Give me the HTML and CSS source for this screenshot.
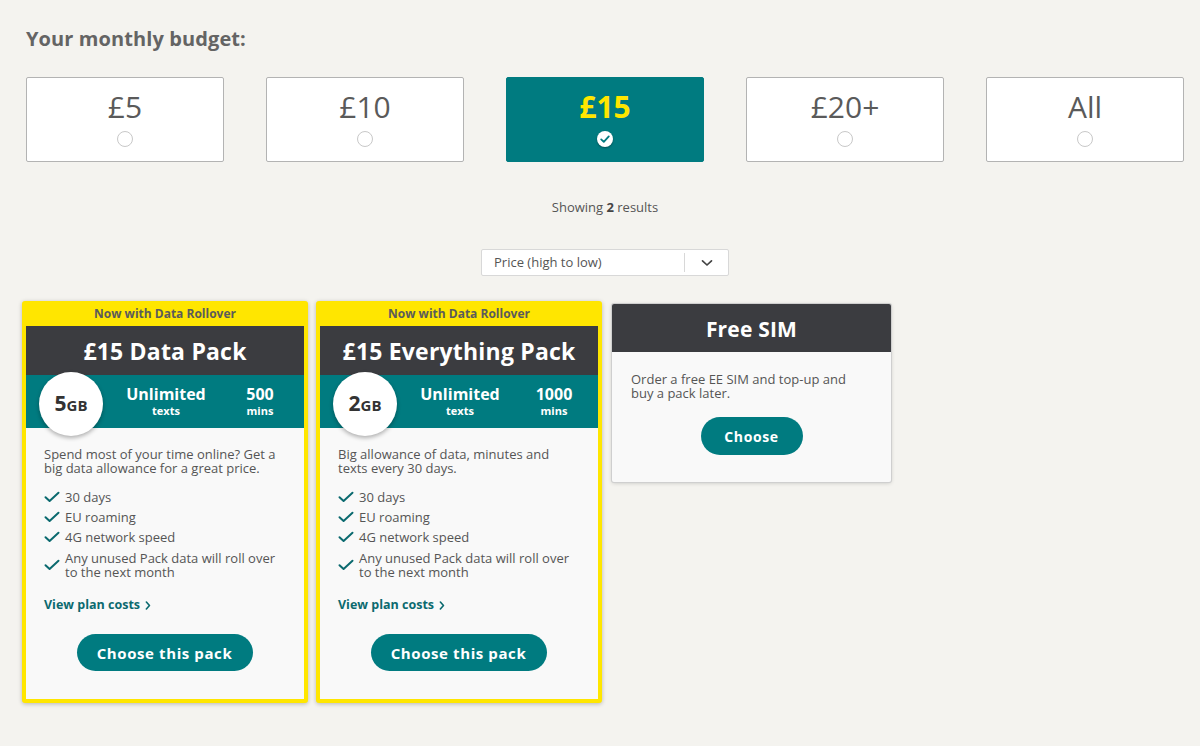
FILE: index.html
```html
<!DOCTYPE html>
<html lang="en">
<head>
<meta charset="utf-8">
<title>Your monthly budget</title>
<link rel="stylesheet" href="styles.css">
</head>
<body>
<main class="page">
  <h2 class="budget-title">Your monthly budget:</h2>
  <div class="budget-options">
    <div class="budget-option"><span class="amount">£5</span><span class="radio"></span></div>
    <div class="budget-option"><span class="amount">£10</span><span class="radio"></span></div>
    <div class="budget-option selected"><span class="amount">£15</span><span class="radio checked"><svg viewBox="0 0 16 16" width="16" height="16"><path d="M4.2 8.4 L6.8 10.9 L11.8 5.4" fill="none" stroke="#007b80" stroke-width="1.8" stroke-linecap="round" stroke-linejoin="round"/></svg></span></div>
    <div class="budget-option"><span class="amount">£20+</span><span class="radio"></span></div>
    <div class="budget-option"><span class="amount">All</span><span class="radio"></span></div>
  </div>

  <p class="results">Showing <b>2</b> results</p>

  <div class="sort-wrap">
    <div class="sort">
      <span class="sort-label">Price (high to low)</span>
      <span class="sort-arrow"><svg viewBox="0 0 12 8" width="12" height="8"><path d="M1.5 1.8 L6 6 L10.5 1.8" fill="none" stroke="#444" stroke-width="1.7" stroke-linecap="round" stroke-linejoin="round"/></svg></span>
    </div>
  </div>

  <div class="cards">
    <div class="card featured">
      <div class="banner">Now with Data Rollover</div>
      <div class="card-inner">
        <div class="card-head">£15 Data Pack</div>
        <div class="allowance">
          <div class="data-circle"><span class="num">5</span><span class="unit">GB</span></div>
          <div class="stat"><span class="big">Unlimited</span><span class="small">texts</span></div>
          <div class="stat"><span class="big">500</span><span class="small">mins</span></div>
        </div>
        <div class="card-body">
          <p class="desc">Spend most of your time online? Get a big data allowance for a great price.</p>
          <ul class="features">
            <li><svg class="tick" viewBox="0 0 16 12" width="16" height="12"><path d="M1.5 6.2 L5.6 10 L14.5 1.8" fill="none" stroke="#0b6a6f" stroke-width="2" stroke-linecap="round" stroke-linejoin="round"/></svg><span>30 days</span></li>
            <li><svg class="tick" viewBox="0 0 16 12" width="16" height="12"><path d="M1.5 6.2 L5.6 10 L14.5 1.8" fill="none" stroke="#0b6a6f" stroke-width="2" stroke-linecap="round" stroke-linejoin="round"/></svg><span>EU roaming</span></li>
            <li><svg class="tick" viewBox="0 0 16 12" width="16" height="12"><path d="M1.5 6.2 L5.6 10 L14.5 1.8" fill="none" stroke="#0b6a6f" stroke-width="2" stroke-linecap="round" stroke-linejoin="round"/></svg><span>4G network speed</span></li>
            <li><svg class="tick" viewBox="0 0 16 12" width="16" height="12"><path d="M1.5 6.2 L5.6 10 L14.5 1.8" fill="none" stroke="#0b6a6f" stroke-width="2" stroke-linecap="round" stroke-linejoin="round"/></svg><span>Any unused Pack data will roll over to the next month</span></li>
          </ul>
          <a class="costs" href="#">View plan costs <svg viewBox="0 0 6 10" width="6" height="9"><path d="M1.2 1.2 L4.6 5 L1.2 8.8" fill="none" stroke="#0b6a6f" stroke-width="1.8" stroke-linecap="round" stroke-linejoin="round"/></svg></a>
          <div class="btn-row"><button class="btn wide">Choose this pack</button></div>
        </div>
      </div>
    </div>

    <div class="card featured">
      <div class="banner">Now with Data Rollover</div>
      <div class="card-inner">
        <div class="card-head">£15 Everything Pack</div>
        <div class="allowance">
          <div class="data-circle"><span class="num">2</span><span class="unit">GB</span></div>
          <div class="stat"><span class="big">Unlimited</span><span class="small">texts</span></div>
          <div class="stat"><span class="big">1000</span><span class="small">mins</span></div>
        </div>
        <div class="card-body">
          <p class="desc">Big allowance of data, minutes and texts every 30 days.</p>
          <ul class="features">
            <li><svg class="tick" viewBox="0 0 16 12" width="16" height="12"><path d="M1.5 6.2 L5.6 10 L14.5 1.8" fill="none" stroke="#0b6a6f" stroke-width="2" stroke-linecap="round" stroke-linejoin="round"/></svg><span>30 days</span></li>
            <li><svg class="tick" viewBox="0 0 16 12" width="16" height="12"><path d="M1.5 6.2 L5.6 10 L14.5 1.8" fill="none" stroke="#0b6a6f" stroke-width="2" stroke-linecap="round" stroke-linejoin="round"/></svg><span>EU roaming</span></li>
            <li><svg class="tick" viewBox="0 0 16 12" width="16" height="12"><path d="M1.5 6.2 L5.6 10 L14.5 1.8" fill="none" stroke="#0b6a6f" stroke-width="2" stroke-linecap="round" stroke-linejoin="round"/></svg><span>4G network speed</span></li>
            <li><svg class="tick" viewBox="0 0 16 12" width="16" height="12"><path d="M1.5 6.2 L5.6 10 L14.5 1.8" fill="none" stroke="#0b6a6f" stroke-width="2" stroke-linecap="round" stroke-linejoin="round"/></svg><span>Any unused Pack data will roll over to the next month</span></li>
          </ul>
          <a class="costs" href="#">View plan costs <svg viewBox="0 0 6 10" width="6" height="9"><path d="M1.2 1.2 L4.6 5 L1.2 8.8" fill="none" stroke="#0b6a6f" stroke-width="1.8" stroke-linecap="round" stroke-linejoin="round"/></svg></a>
          <div class="btn-row"><button class="btn wide">Choose this pack</button></div>
        </div>
      </div>
    </div>

    <div class="card plain">
      <div class="card-head small-head">Free SIM</div>
      <div class="card-body plain-body">
        <p class="desc narrow-desc">Order a free EE SIM and top-up and buy a pack later.</p>
        <div class="btn-row"><button class="btn narrow">Choose</button></div>
      </div>
    </div>
  </div>
</main>
</body>
</html>
```

FILE: styles.css
```css
* { box-sizing: border-box; }

html, body {
  margin: 0;
  padding: 0;
  background: #f4f3ef;
}

body {
  font-family: "Open Sans", "Noto Sans", "Liberation Sans", sans-serif;
  color: #555;
}

.page {
  padding: 27px 16px 40px 26px;
}

.budget-title {
  margin: 0;
  font-size: 20px;
  line-height: 24px;
  font-weight: 700;
  color: #646464;
  letter-spacing: 0.1px;
}

.budget-options {
  margin-top: 26px;
  display: grid;
  grid-template-columns: repeat(5, 1fr);
  gap: 42px;
}

.budget-option {
  height: 85px;
  background: #fff;
  border: 1px solid #b3b3b3;
  border-radius: 2px;
  display: flex;
  flex-direction: column;
  align-items: center;
  padding-top: 12px;
}

.amount {
  font-size: 30px;
  line-height: 34px;
  color: #5a5a5a;
}

.radio {
  margin-top: 7px;
  width: 16px;
  height: 16px;
  border-radius: 50%;
  border: 1px solid #c8c8c8;
  background: #fff;
  display: flex;
  align-items: center;
  justify-content: center;
}

.budget-option.selected {
  background: #007b80;
  border-color: #007b80;
}

.budget-option.selected .amount {
  color: #ffe600;
  font-weight: 700;
}

.radio.checked {
  border: none;
  box-shadow: 0 1px 2px rgba(0,0,0,0.35);
}

.results {
  margin: 35px 0 0;
  text-align: center;
  font-size: 13px;
  line-height: 20px;
  color: #555;
}

.results b { color: #444; }

.sort-wrap {
  margin-top: 32px;
  display: flex;
  justify-content: center;
}

.sort {
  width: 248px;
  height: 27px;
  background: #fff;
  border: 1px solid #d8d8d8;
  border-radius: 2px;
  display: flex;
  align-items: stretch;
}

.sort-label {
  flex: 1;
  padding-left: 12px;
  font-size: 13px;
  line-height: 25px;
  color: #555;
}

.sort-arrow {
  width: 44px;
  border-left: 1px solid #d8d8d8;
  display: flex;
  align-items: center;
  justify-content: center;
  margin: 3px 0;
}

.cards {
  margin-top: 25px;
  margin-left: -4px;
  display: flex;
  align-items: flex-start;
  gap: 8px;
}

.card.featured {
  width: 286px;
  background: #ffe600;
  border-radius: 3px;
  padding: 0 4px 4px;
  box-shadow: 0 1px 4px rgba(0,0,0,0.25);
}

.banner {
  height: 25px;
  text-align: center;
  font-size: 12px;
  line-height: 25px;
  font-weight: 700;
  color: #5b5b5b;
}

.card-inner {
  background: #f9f9f9;
  position: relative;
}

.card-head {
  background: #3b3c40;
  color: #fff;
  text-align: center;
  font-size: 23px;
  line-height: 50px;
  height: 49px;
  font-weight: 700;
  letter-spacing: 0.2px;
}

.allowance {
  height: 53px;
  background: #007b80;
  position: relative;
  display: flex;
  padding-left: 90px;
  color: #fff;
}

.data-circle {
  position: absolute;
  left: 13px;
  top: -3px;
  width: 64px;
  height: 64px;
  border-radius: 50%;
  background: #fff;
  box-shadow: 0 2px 4px rgba(0,0,0,0.3);
  display: flex;
  align-items: baseline;
  justify-content: center;
  padding-top: 18px;
  color: #333;
  font-weight: 700;
}

.data-circle .num { font-size: 21px; line-height: 26px; }
.data-circle .unit { font-size: 15px; }

.stat {
  display: flex;
  flex-direction: column;
  align-items: center;
  padding-top: 9px;
}

.stat:nth-of-type(2) { width: 100px; }
.stat:nth-of-type(3) { width: 88px; }

.stat .big {
  font-size: 16px;
  line-height: 20px;
  font-weight: 700;
}

.stat .small {
  font-size: 11px;
  line-height: 13px;
  font-weight: 700;
}

.card-body {
  padding: 19px 18px 28px;
}

.desc {
  margin: 0;
  font-size: 13px;
  line-height: 14px;
  color: #555;
}

.features {
  list-style: none;
  margin: 15px 0 0;
  padding: 0;
}

.features li {
  display: flex;
  align-items: center;
  gap: 5px;
  font-size: 13px;
  line-height: 14px;
  margin-top: 6px;
}

.features li:first-child { margin-top: 0; }
.features li:last-child { margin-top: 7px; }

.tick { flex: none; }

.costs {
  display: inline-flex;
  align-items: center;
  gap: 5px;
  margin-top: 19px;
  font-size: 12.5px;
  line-height: 14px;
  font-weight: 700;
  color: #0b6a6f;
  text-decoration: none;
}

.btn-row {
  display: flex;
  justify-content: center;
  margin-top: 20px;
}

.btn {
  background: #007b80;
  color: #fff;
  border: none;
  border-radius: 19px;
  font-family: inherit;
  font-weight: 700;
  font-size: 15px;
  letter-spacing: 0.6px;
  height: 37px;
}

.btn.wide { width: 176px; margin-left: -1px; }
.btn.narrow { width: 102px; height: 38px; font-size: 14px; }

.card.plain {
  width: 279px;
  margin-left: 2px;
  margin-top: 3px;
  background: #f9f9f9;
  border-radius: 2px;
  overflow: hidden;
  box-shadow: 0 0 0 1px #cfcfcf, 0 1px 4px rgba(0,0,0,0.2);
}

.small-head {
  height: 48px;
  line-height: 50px;
  font-size: 21px;
}

.plain-body {
  padding: 20px 19px 27px 19px;
}

.narrow-desc { max-width: 225px; }

.plain-body .btn-row { margin-top: 17px; }
```
